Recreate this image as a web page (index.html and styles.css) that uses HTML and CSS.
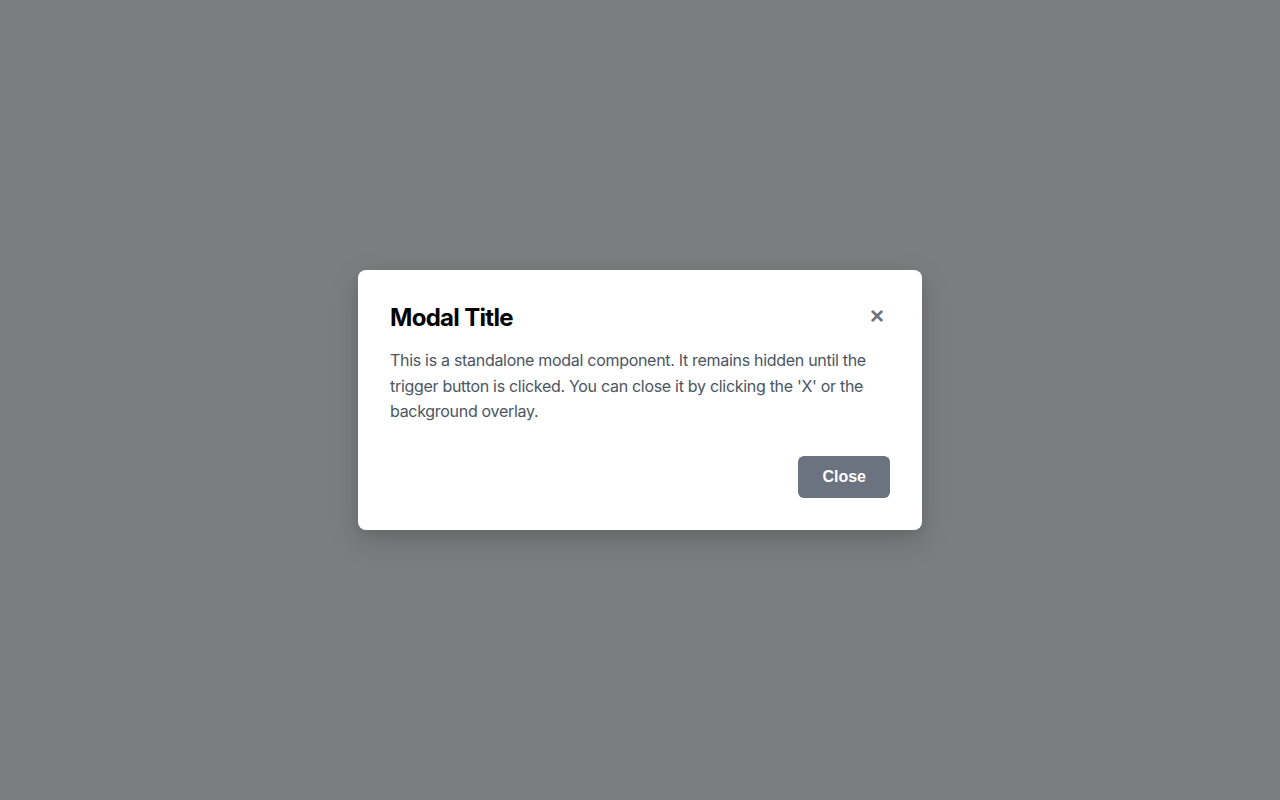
FILE: index.html
```html
<!DOCTYPE html>
<html lang="en">
<head>
<meta charset="utf-8">
<title>Modal</title>
<link rel="stylesheet" href="styles.css">
</head>
<body>
<div class="overlay">
  <div class="modal" role="dialog" aria-labelledby="modal-title">
    <div class="modal-header">
      <h2 id="modal-title" class="modal-title">Modal Title</h2>
      <button class="modal-x" aria-label="Close">&times;</button>
    </div>
    <p class="modal-body">This is a standalone modal component. It remains hidden until the trigger button is clicked. You can close it by clicking the 'X' or the background overlay.</p>
    <div class="modal-footer">
      <button class="btn-close">Close</button>
    </div>
  </div>
</div>
</body>
</html>
```

FILE: styles.css
```css
html, body {
  margin: 0;
  padding: 0;
  height: 100%;
}
body {
  font-family: Inter, "Liberation Sans", sans-serif;
  background: #7c7d7f;
}
.overlay {
  height: 100vh;
  display: flex;
  align-items: center;
  justify-content: center;
  background: #7c7d7f;
}
.modal {
  width: 500px;
  padding: 32px;
  background: #ffffff;
  border-radius: 8px;
  box-shadow: 0 10px 30px rgba(0, 0, 0, 0.16), 0 4px 10px rgba(0, 0, 0, 0.06);
}
.modal-header {
  display: flex;
  align-items: center;
  justify-content: space-between;
  margin-bottom: 14px;
}
.modal-title {
  margin: 0;
  font-size: 24px;
  line-height: 32px;
  font-weight: 700;
  letter-spacing: -0.7px;
  color: #000000;
}
.modal-x {
  border: none;
  background: none;
  padding: 0 6px 4px 0;
  margin: 0;
  font-family: "Liberation Sans", Arial, sans-serif;
  font-size: 24px;
  line-height: 24px;
  font-weight: 700;
  color: #6b7280;
  cursor: pointer;
}
.modal-body {
  margin: 0;
  font-size: 16px;
  line-height: 25.5px;
  letter-spacing: -0.3px;
  color: #4b5563;
}
.modal-footer {
  display: flex;
  justify-content: flex-end;
  margin-top: 31px;
}
.btn-close {
  border: none;
  background: #6b7280;
  color: #ffffff;
  font-family: "Liberation Sans", Arial, sans-serif;
  font-size: 16px;
  font-weight: 700;
  line-height: 22px;
  padding: 10px 24px;
  border-radius: 6px;
  cursor: pointer;
}
```
